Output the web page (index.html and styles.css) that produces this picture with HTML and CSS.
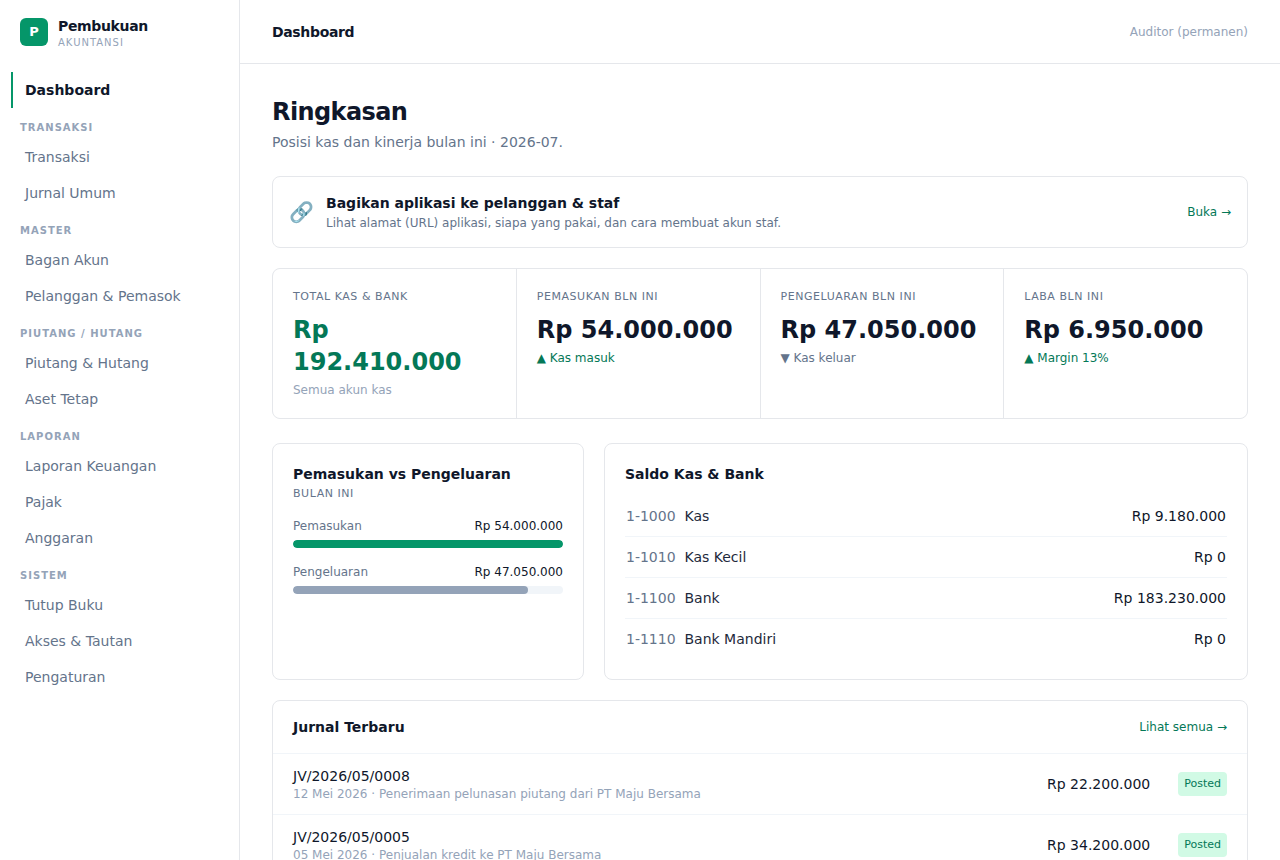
FILE: index.html
```html
<!DOCTYPE html>
<html lang="id">
<head>
<meta charset="utf-8">
<title>Pembukuan</title>
<link rel="stylesheet" href="styles.css">
</head>
<body>
<div class="app">
  <aside class="sidebar">
    <div class="brand">
      <div class="logo">P</div>
      <div class="brand-text">
        <div class="brand-name">Pembukuan</div>
        <div class="brand-sub">AKUNTANSI</div>
      </div>
    </div>
    <nav class="nav">
      <a class="nav-item active">Dashboard</a>
      <div class="nav-label">TRANSAKSI</div>
      <a class="nav-item">Transaksi</a>
      <a class="nav-item">Jurnal Umum</a>
      <div class="nav-label">MASTER</div>
      <a class="nav-item">Bagan Akun</a>
      <a class="nav-item">Pelanggan &amp; Pemasok</a>
      <div class="nav-label">PIUTANG / HUTANG</div>
      <a class="nav-item">Piutang &amp; Hutang</a>
      <a class="nav-item">Aset Tetap</a>
      <div class="nav-label">LAPORAN</div>
      <a class="nav-item">Laporan Keuangan</a>
      <a class="nav-item">Pajak</a>
      <a class="nav-item">Anggaran</a>
      <div class="nav-label">SISTEM</div>
      <a class="nav-item">Tutup Buku</a>
      <a class="nav-item">Akses &amp; Tautan</a>
      <a class="nav-item">Pengaturan</a>
    </nav>
  </aside>
  <div class="content">
    <header class="topbar">
      <div class="topbar-title">Dashboard</div>
      <div class="topbar-user">Auditor (permanen)</div>
    </header>
    <main class="main">
      <h1 class="title">Ringkasan</h1>
      <p class="subtitle">Posisi kas dan kinerja bulan ini · 2026-07.</p>

      <a class="card share">
        <span class="share-icon">🔗</span>
        <span class="share-body">
          <span class="share-title">Bagikan aplikasi ke pelanggan &amp; staf</span>
          <span class="share-text">Lihat alamat (URL) aplikasi, siapa yang pakai, dan cara membuat akun staf.</span>
        </span>
        <span class="link">Buka →</span>
      </a>

      <section class="stats">
        <div class="stat">
          <div class="stat-label">TOTAL KAS &amp; BANK</div>
          <div class="stat-value green">Rp 192.410.000</div>
          <div class="stat-note faint">Semua akun kas</div>
        </div>
        <div class="stat">
          <div class="stat-label">PEMASUKAN BLN INI</div>
          <div class="stat-value">Rp 54.000.000</div>
          <div class="stat-note green">▲ Kas masuk</div>
        </div>
        <div class="stat">
          <div class="stat-label">PENGELUARAN BLN INI</div>
          <div class="stat-value">Rp 47.050.000</div>
          <div class="stat-note">▼ Kas keluar</div>
        </div>
        <div class="stat">
          <div class="stat-label">LABA BLN INI</div>
          <div class="stat-value">Rp 6.950.000</div>
          <div class="stat-note green">▲ Margin 13%</div>
        </div>
      </section>

      <section class="panels">
        <div class="card panel">
          <h2 class="heading">Pemasukan vs Pengeluaran</h2>
          <div class="period">BULAN INI</div>
          <div class="meter">
            <div class="meter-head"><span>Pemasukan</span><span class="meter-value">Rp 54.000.000</span></div>
            <div class="track"><div class="fill fill-in" style="width:100%"></div></div>
          </div>
          <div class="meter">
            <div class="meter-head"><span>Pengeluaran</span><span class="meter-value">Rp 47.050.000</span></div>
            <div class="track"><div class="fill fill-out" style="width:87%"></div></div>
          </div>
        </div>
        <div class="card panel">
          <h2 class="heading">Saldo Kas &amp; Bank</h2>
          <div class="accounts">
            <div class="account"><span class="account-name"><span class="code">1-1000</span>&nbsp; Kas</span><span class="amount">Rp 9.180.000</span></div>
            <div class="account"><span class="account-name"><span class="code">1-1010</span>&nbsp; Kas Kecil</span><span class="amount">Rp 0</span></div>
            <div class="account"><span class="account-name"><span class="code">1-1100</span>&nbsp; Bank</span><span class="amount">Rp 183.230.000</span></div>
            <div class="account"><span class="account-name"><span class="code">1-1110</span>&nbsp; Bank Mandiri</span><span class="amount">Rp 0</span></div>
          </div>
        </div>
      </section>

      <section class="card journal">
        <div class="journal-head">
          <h2 class="heading">Jurnal Terbaru</h2>
          <a class="link">Lihat semua →</a>
        </div>
        <div class="entry">
          <div class="entry-body">
            <div class="entry-no">JV/2026/05/0008</div>
            <div class="entry-desc">12 Mei 2026 · Penerimaan pelunasan piutang dari PT Maju Bersama</div>
          </div>
          <div class="amount">Rp 22.200.000</div>
          <div class="badge">Posted</div>
        </div>
        <div class="entry">
          <div class="entry-body">
            <div class="entry-no">JV/2026/05/0005</div>
            <div class="entry-desc">05 Mei 2026 · Penjualan kredit ke PT Maju Bersama</div>
          </div>
          <div class="amount">Rp 34.200.000</div>
          <div class="badge">Posted</div>
        </div>
      </section>
    </main>
  </div>
</div>
</body>
</html>
```
FILE: styles.css
```css
* { box-sizing: border-box; }

body {
  margin: 0;
  height: 860px;
  overflow: hidden;
  background: #fff;
  color: #0f172a;
  font: 14px/20px "DejaVu Sans", sans-serif;
}

h1, h2, p { margin: 0; }

.app { display: flex; height: 860px; }

/* Sidebar */
.sidebar {
  flex: 0 0 240px;
  border-right: 1px solid #e5e7eb;
}
.brand {
  display: flex;
  align-items: center;
  gap: 10px;
  height: 64px;
  padding: 0 20px;
}
.logo {
  width: 28px;
  height: 28px;
  border-radius: 6px;
  background: #059669;
  color: #fff;
  font-size: 13px;
  font-weight: 700;
  line-height: 28px;
  text-align: center;
}
.brand-text { padding-top: 3px; }
.brand-name {
  font-weight: 700;
  line-height: 18px;
  letter-spacing: -0.35px;
}
.brand-sub {
  color: #94a3b8;
  font-size: 10px;
  line-height: 15px;
  letter-spacing: 1px;
}
.nav { padding: 8px 12px 8px 11px; }
.nav-item {
  display: block;
  padding: 8px 12px;
  border-left: 2px solid transparent;
  color: #64748b;
}
.nav-item.active {
  border-left-color: #059669;
  color: #0f172a;
  font-weight: 700;
}
.nav-label {
  padding: 12px 9px 4px;
  color: #94a3b8;
  font-size: 10px;
  font-weight: 700;
  line-height: 15px;
  letter-spacing: 1px;
}

/* Page frame */
.content { flex: 1; min-width: 0; }
.topbar {
  display: flex;
  align-items: center;
  justify-content: space-between;
  height: 64px;
  padding: 0 32px;
  border-bottom: 1px solid #e5e7eb;
}
.topbar-title { font-weight: 700; letter-spacing: -0.35px; }
.topbar-user { color: #94a3b8; font-size: 12px; line-height: 16px; }
.main { padding: 32px; }
.title {
  font-size: 24px;
  line-height: 32px;
  letter-spacing: -0.6px;
}
.subtitle { margin-top: 4px; color: #64748b; }
.card {
  border: 1px solid #e5e7eb;
  border-radius: 8px;
  background: #fff;
}
.heading { font-size: 14px; line-height: 20px; }
.link { color: #047857; font-size: 12px; line-height: 16px; }

/* Share banner */
.share {
  display: flex;
  align-items: center;
  gap: 12px;
  margin-top: 24px;
  padding: 16px;
}
.share-icon { font-size: 20px; line-height: 28px; }
.share-body { flex: 1; }
.share-title { display: block; font-weight: 700; }
.share-text {
  display: block;
  margin-top: 2px;
  color: #64748b;
  font-size: 12px;
  line-height: 16px;
}

/* Key figures */
.stats {
  display: grid;
  grid-template-columns: repeat(4, 1fr);
  gap: 1px;
  margin-top: 20px;
  border: 1px solid #e5e7eb;
  border-radius: 8px;
  background: #e5e7eb;
  overflow: hidden;
}
.stat { padding: 20px; background: #fff; }
.stat-label {
  color: #64748b;
  font-size: 11px;
  line-height: 16.5px;
  letter-spacing: 0.55px;
}
.stat-value {
  margin-top: 8px;
  font-size: 24px;
  font-weight: 700;
  line-height: 32px;
}
.stat-value.green { color: #047857; }
.stat-note {
  margin-top: 4px;
  color: #64748b;
  font-size: 12px;
  line-height: 16px;
}
.stat-note.green { color: #047857; }
.stat-note.faint { color: #94a3b8; }

/* Panels */
.panels {
  display: grid;
  grid-template-columns: 312px 1fr;
  gap: 20px;
  margin-top: 24px;
}
.panel { padding: 20px; }
.period {
  padding-top: 1px;
  color: #64748b;
  font-size: 11px;
  line-height: 17px;
  letter-spacing: 0.55px;
}
.meter { margin-top: 16px; }
.meter-head {
  display: flex;
  justify-content: space-between;
  margin-bottom: 6px;
  color: #64748b;
  font-size: 12px;
  line-height: 16px;
}
.meter-value { color: #0f172a; }
.track {
  height: 8px;
  border-radius: 4px;
  background: #f1f5f9;
  overflow: hidden;
}
.fill { height: 8px; border-radius: 4px; }
.fill-in { background: #059669; }
.fill-out { background: #94a3b8; }
.accounts { margin-top: 12px; }
.account {
  display: flex;
  justify-content: space-between;
  padding: 10px 1px;
  border-bottom: 1px solid #f1f5f9;
}
.account:last-child { border-bottom: 0; }
.account-name { color: #1e293b; }
.code { color: #64748b; }

/* Journal */
.journal { margin-top: 20px; }
.journal-head {
  display: flex;
  align-items: center;
  justify-content: space-between;
  padding: 16px 20px;
  border-bottom: 1px solid #f1f5f9;
}
.entry {
  display: flex;
  align-items: center;
  padding: 12px 20px;
  border-bottom: 1px solid #f1f5f9;
}
.entry-body { flex: 1; }
.entry-desc { color: #94a3b8; font-size: 12px; line-height: 16px; }
.badge {
  margin-left: 28px;
  padding: 4px 6px;
  border-radius: 4px;
  background: #d1fae5;
  color: #047857;
  font-size: 11px;
  line-height: 16px;
}
```
